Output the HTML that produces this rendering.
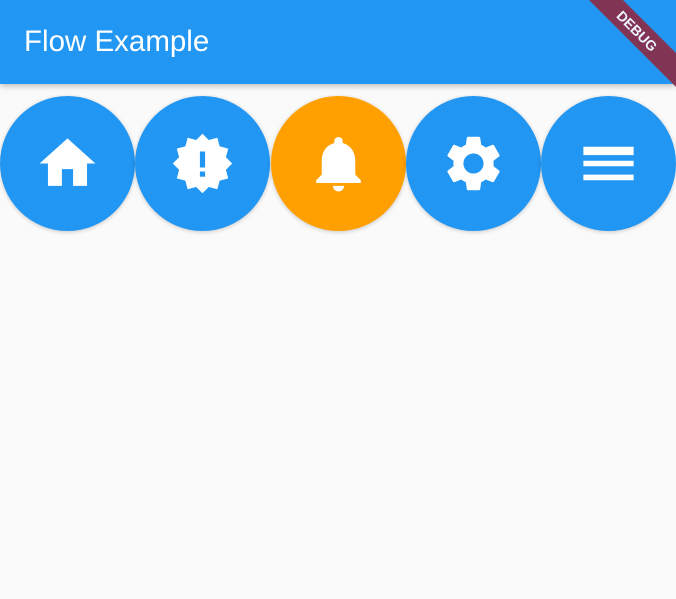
<!DOCTYPE html>
<html><head><style>
html,body{margin:0;padding:0;width:676px;height:599px;overflow:hidden;background:#fafafa;font-family:"Liberation Sans",sans-serif}
.bar{position:absolute;left:0;top:0;width:676px;height:84px;background:#2196f3;box-shadow:0 2px 6px rgba(0,0,0,.25)}
.title{position:absolute;left:24px;top:24px;font-size:29.5px;color:#fff;line-height:36px}
.c{position:absolute;top:96px;width:135px;height:135px;border-radius:50%;background:#2196f3;box-shadow:0 1px 4px rgba(0,0,0,.2)}
.c svg{position:absolute;left:34px;top:34px;width:67px;height:67px;fill:#fff}
.ribbon{position:absolute;right:-36px;top:19px;width:150px;height:24px;background:#8b2c48;opacity:.92;transform:rotate(45deg);color:#fff;font-weight:bold;font-size:14px;text-align:center;line-height:24px}
</style></head><body>
<div class="bar"><div class="title">Flow Example</div></div>
<div class="c" style="left:0"><svg viewBox="0 0 24 24"><path d="M10 20v-6h4v6h5v-8h3L12 3 2 12h3v8z"/></svg></div>
<div class="c" style="left:135px"><svg viewBox="-33.5 -33.5 67 67" style="left:34px;top:34px">
<rect x="-21" y="-21" width="42" height="42" transform="rotate(45)"/>
<rect x="-21" y="-21" width="42" height="42" transform="rotate(15)"/>
<rect x="-21" y="-21" width="42" height="42" transform="rotate(75)"/>
<rect x="-2.6" y="-12" width="5.2" height="16" fill="#2196f3"/>
<rect x="-2.6" y="8" width="5.2" height="5.2" fill="#2196f3"/>
</svg></div>
<div class="c" style="left:271px;background:#ffa000"><svg viewBox="0 0 24 24"><path d="M12 22c1.1 0 2-.9 2-2h-4c0 1.1.89 2 2 2zm6-6v-5c0-3.07-1.64-5.64-4.5-6.32V4c0-.83-.67-1.5-1.5-1.5s-1.5.67-1.5 1.5v.68C7.63 5.36 6 7.92 6 11v5l-2 2v1h16v-1l-2-2z"/></svg></div>
<div class="c" style="left:406px"><svg viewBox="0 0 24 24"><path d="M19.14 12.94c.04-.3.06-.61.06-.94 0-.32-.02-.64-.07-.94l2.03-1.58c.18-.14.23-.41.12-.61l-1.92-3.32c-.12-.22-.37-.29-.59-.22l-2.39.96c-.5-.38-1.03-.7-1.62-.94l-.36-2.54c-.04-.24-.24-.41-.48-.41h-3.84c-.24 0-.43.17-.47.41l-.36 2.54c-.59.24-1.13.57-1.62.94l-2.39-.96c-.22-.08-.47 0-.59.22L2.74 8.87c-.12.21-.08.47.12.61l2.03 1.58c-.05.3-.09.63-.09.94s.02.64.07.94l-2.03 1.58c-.18.14-.23.41-.12.61l1.92 3.32c.12.22.37.29.59.22l2.39-.96c.5.38 1.03.7 1.62.94l.36 2.54c.05.24.24.41.48.41h3.840c.24 0 .44-.17.47-.41l.36-2.54c.59-.24 1.13-.56 1.62-.94l2.39.96c.22.08.47 0 .59-.22l1.92-3.32c.12-.22.07-.47-.12-.61l-2.01-1.58zM12 15.6c-1.98 0-3.6-1.62-3.6-3.6s1.62-3.6 3.6-3.6 3.6 1.62 3.6 3.6-1.62 3.6-3.6 3.6z"/></svg></div>
<div class="c" style="left:541px"><svg viewBox="0 0 24 24"><path d="M3 18h18v-2H3v2zm0-5h18v-2H3v2zm0-6v2h18V6H3z"/></svg></div>
<div class="ribbon">DEBUG</div>
</body></html>
